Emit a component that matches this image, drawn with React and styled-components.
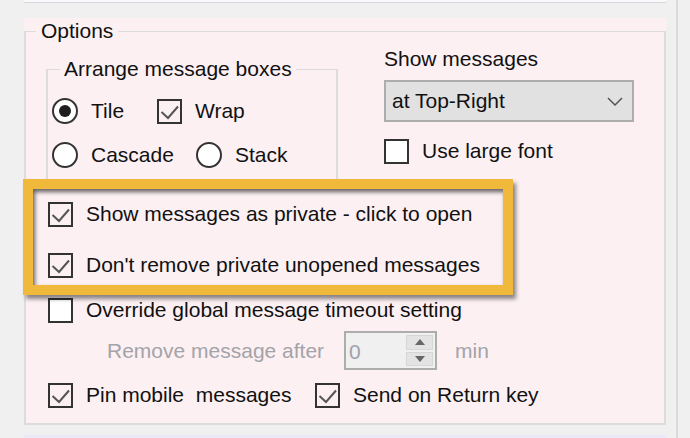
import React from "react";
import styled, { createGlobalStyle } from "styled-components";

const GlobalStyle = createGlobalStyle`
	body {
		margin: 0;
		background: #f0f0f0;
		font-family: "Liberation Sans", Arial, sans-serif;
		font-size: 21px;
		color: #111;
	}
`;

const Page = styled.div`
	display: flex;
	width: 690px;
	height: 438px;
	overflow: hidden;
	background: #f0f0f0;
`;

const Gutter = styled.div`
	width: 24px;
	flex: none;
`;

const Main = styled.div`
	width: 642px;
	flex: none;
	display: flex;
	flex-direction: column;
`;

const TopStrip = styled.div`
	height: 2px;
	background: #f7f9fc;
	border-bottom: 1px solid #d6d6d6;
	margin-bottom: 15px;
`;

const Panel = styled.div`
	height: 407px;
	background: #fcf0f3;
`;

const BottomStrip = styled.div`
	margin-top: 10px;
	height: 3px;
	background: #ebe9f8;
`;

const ScrollEdge = styled.div`
	margin-left: 10px;
	width: 2px;
	background: #dadada;
`;

const Group = styled.fieldset`
	box-sizing: border-box;
	margin: 0;
	padding: 0;
	min-width: 0;
	height: 407px;
	border: 2px solid #dcdcdc;
	border-top-width: 1px;
`;

const InnerGroup = styled.fieldset`
	box-sizing: border-box;
	margin: 12px 0 0;
	padding: 0;
	min-width: 0;
	width: 292px;
	border: 2px solid #dcdcdc;
	border-top-width: 1px;
	border-bottom: none;
`;

const Legend = styled.legend`
	margin-left: ${(p) => p.$offset}px;
	padding: 0 ${(p) => p.$pad}px;
	line-height: 26px;
	height: 26px;
	white-space: nowrap;
`;

const TopRow = styled.div`
	display: flex;
	align-items: flex-start;
	padding-left: 20px;
`;

const RadioGrid = styled.div`
	display: flex;
	flex-direction: column;
	gap: 18px;
	padding: 16px 0 11px 4px;
`;

const Row = styled.div`
	display: flex;
	align-items: center;
	margin-top: ${(p) => p.$top || 0}px;
`;

const Item = styled.label`
	display: flex;
	align-items: center;
	gap: 13px;
	flex: none;
	width: ${(p) => (p.$w ? `${p.$w}px` : "auto")};
	height: 26px;
	white-space: pre;
	color: ${(p) => (p.$disabled ? "#a3a3a8" : "#111")};
`;

const Box = styled.span`
	box-sizing: border-box;
	width: 25px;
	height: 25px;
	flex: none;
	border: 2px solid #333;
	background: ${(p) => (p.$checked ? "transparent" : "#fff")};
	display: flex;
	align-items: center;
	justify-content: center;
`;

const RadioRing = styled.span`
	box-sizing: border-box;
	width: 26px;
	height: 26px;
	flex: none;
	border: 2px solid #333;
	border-radius: 50%;
	background: #fff;
	display: flex;
	align-items: center;
	justify-content: center;
`;

const Dot = styled.span`
	width: 12px;
	height: 12px;
	border-radius: 50%;
	background: #1e1e1e;
`;

const RightCol = styled.div`
	margin-left: 46px;
	padding-top: 2px;
	display: flex;
	flex-direction: column;
`;

const Label = styled.div`
	line-height: 26px;
`;

const Select = styled.div`
	box-sizing: border-box;
	margin-top: 8px;
	width: 250px;
	height: 42px;
	border: 2px solid #adadad;
	background: #e1e1e1;
	display: flex;
	align-items: center;
	justify-content: space-between;
	padding: 0 9px 0 6px;
`;

const Highlight = styled.div`
	box-sizing: border-box;
	margin-left: -3px;
	width: 490px;
	height: 116px;
	border: 10px solid #f0b93b;
	padding: 12px 0 0 15px;
	display: flex;
	flex-direction: column;
	gap: 25px;
	box-shadow: 3px 4px 4px rgba(0, 0, 0, 0.45),
		inset 2px 3px 4px rgba(0, 0, 0, 0.6);
	position: relative;
`;

const Body = styled.div`
	padding-left: 22px;
	display: flex;
	flex-direction: column;
`;

const RemoveRow = styled.div`
	display: flex;
	align-items: center;
	margin-top: 8px;
	padding-left: 59px;
	color: #a3a3a8;
`;

const RemoveLabel = styled.span`
	width: 237px;
	white-space: nowrap;
`;

const Spinner = styled.div`
	box-sizing: border-box;
	width: 93px;
	height: 39px;
	border: 2px solid #adadad;
	background: #f0f0f0;
	display: flex;
	justify-content: space-between;
	padding: 2px 2px 2px 3px;
`;

const SpinValue = styled.span`
	line-height: 33px;
	color: #a0a0a8;
`;

const SpinButtons = styled.div`
	width: 27px;
	display: flex;
	flex-direction: column;
	gap: 2px;
`;

const SpinButton = styled.div`
	flex: 1;
	background: #e3e3e3;
	border: 1px solid #d6d6d6;
	display: flex;
	align-items: center;
	justify-content: center;
`;

const Unit = styled.span`
	margin-left: 18px;
`;

const Tick = () => (
	<svg width="21" height="21" viewBox="0 0 21 21">
		<polyline
			points="2.5,11 9,17 19,5.5"
			fill="none"
			stroke="#555"
			strokeWidth="2"
		/>
	</svg>
);

const Check = ({ label, checked, w }) => (
	<Item $w={w}>
		<Box $checked={checked}>{checked && <Tick />}</Box>
		{label}
	</Item>
);

const Radio = ({ label, checked, w }) => (
	<Item $w={w}>
		<RadioRing>{checked && <Dot />}</RadioRing>
		{label}
	</Item>
);

const Arrow = ({ up }) => (
	<svg width="10" height="6" viewBox="0 0 10 6">
		<polygon points={up ? "0,6 10,6 5,0" : "0,0 10,0 5,6"} fill="#666" />
	</svg>
);

const App = () => {
	return (
		<>
			<GlobalStyle />
			<Page>
				<Gutter />
				<Main>
					<TopStrip />
					<Panel>
						<Group>
							<Legend $offset={10} $pad={5}>
								Options
							</Legend>
							<TopRow>
								<InnerGroup>
									<Legend $offset={12} $pad={4}>
										Arrange message boxes
									</Legend>
									<RadioGrid>
										<Row>
											<Radio label="Tile" checked w={105} />
											<Check label="Wrap" checked />
										</Row>
										<Row>
											<Radio label="Cascade" w={144} />
											<Radio label="Stack" />
										</Row>
									</RadioGrid>
								</InnerGroup>
								<RightCol>
									<Label>Show messages</Label>
									<Select>
										<span>at Top-Right</span>
										<svg width="16" height="9" viewBox="0 0 16 9">
											<polyline
												points="1,1 8,8 15,1"
												fill="none"
												stroke="#555"
												strokeWidth="1.5"
											/>
										</svg>
									</Select>
									<Row $top={16}>
										<Check label="Use large font" />
									</Row>
								</RightCol>
							</TopRow>
							<Highlight>
								<Check
									label="Show messages as private - click to open"
									checked
								/>
								<Check
									label="Don't remove private unopened messages"
									checked
								/>
							</Highlight>
							<Body>
								<Row $top={2}>
									<Check label="Override global message timeout setting" />
								</Row>
								<RemoveRow>
									<RemoveLabel>Remove message after</RemoveLabel>
									<Spinner>
										<SpinValue>0</SpinValue>
										<SpinButtons>
											<SpinButton>
												<Arrow up />
											</SpinButton>
											<SpinButton>
												<Arrow />
											</SpinButton>
										</SpinButtons>
									</Spinner>
									<Unit>min</Unit>
								</RemoveRow>
								<Row $top={12}>
									<Check label="Pin mobile  messages" checked w={267} />
									<Check label="Send on Return key" checked />
								</Row>
							</Body>
						</Group>
					</Panel>
					<BottomStrip />
				</Main>
				<ScrollEdge />
			</Page>
		</>
	);
};

export default App;
